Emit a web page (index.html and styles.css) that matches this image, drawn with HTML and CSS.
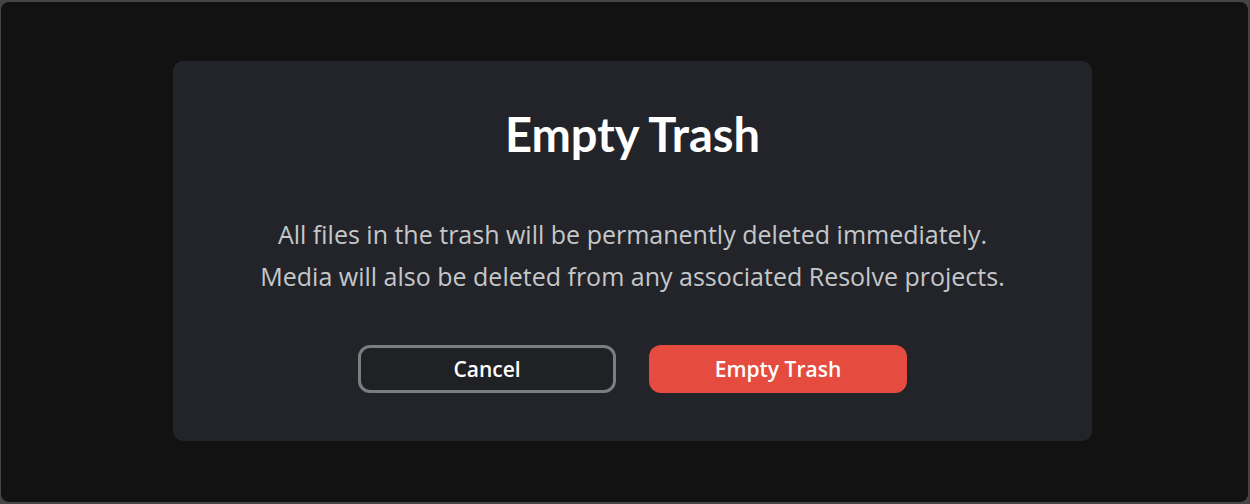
FILE: index.html
```html
<!DOCTYPE html>
<html lang="en">
<head>
<meta charset="utf-8">
<title>Empty Trash</title>
<link rel="stylesheet" href="styles.css">
</head>
<body>
<div class="frame">
  <div class="dialog">
    <h1 class="title">Empty Trash</h1>
    <p class="message">All files in the trash will be permanently deleted immediately.<br>Media will also be deleted from any associated Resolve projects.</p>
    <div class="actions">
      <button class="btn btn-cancel">Cancel</button>
      <button class="btn btn-danger">Empty Trash</button>
    </div>
  </div>
</div>
</body>
</html>
```
FILE: styles.css
```css
html, body {
  margin: 0;
  padding: 0;
  width: 1250px;
  height: 504px;
  background: #454545;
  overflow: hidden;
}
.frame {
  box-sizing: border-box;
  margin: 2px 2px 0 1px;
  width: 1247px;
  height: 500px;
  background: #121212;
  border-radius: 8px;
  display: flex;
  justify-content: flex-start;
  padding: 59px 0 0 172px;
}
.dialog {
  box-sizing: border-box;
  width: 919px;
  height: 380px;
  background: #222429;
  border-radius: 10px;
  display: flex;
  flex-direction: column;
  align-items: center;
  padding-top: 45px;
}
.title {
  margin: 0;
  font-family: Lato, "Open Sans", sans-serif;
  font-weight: 700;
  font-size: 47px;
  line-height: 56px;
  color: #ffffff;
}
.message {
  margin: 51px 0 0;
  font-family: "Open Sans", sans-serif;
  font-size: 25px;
  line-height: 42px;
  color: #c6c7c9;
  text-align: center;
  white-space: nowrap;
}
.actions {
  margin-top: 48px;
  display: flex;
  gap: 33px;
}
.btn {
  box-sizing: border-box;
  width: 258px;
  height: 48px;
  border-radius: 12px;
  font-family: "Open Sans", sans-serif;
  font-weight: 600;
  font-size: 21px;
  color: #ffffff;
  cursor: pointer;
}
.btn-cancel {
  background: #1f2125;
  border: 3px solid #7b7d80;
}
.btn-danger {
  background: #e64b3f;
  border: none;
}
```
